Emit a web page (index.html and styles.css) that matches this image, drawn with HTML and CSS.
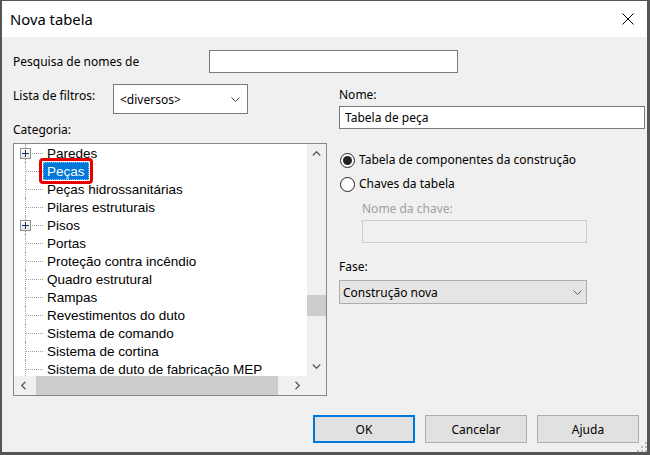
FILE: index.html
```html
<!DOCTYPE html>
<html lang="pt">
<head>
    <meta charset="UTF-8">
    <title>Nova tabela</title>
    <link rel="stylesheet" href="styles.css">
</head>
<body>
    <div class="window">
        <div class="titlebar">
            <span class="title">Nova tabela</span>
            <svg class="close" width="12" height="12" viewBox="0 0 12 12">
                <path d="M0.5 0.5 L11.5 11.5 M11.5 0.5 L0.5 11.5" stroke="#000" stroke-width="1" fill="none"/>
            </svg>
        </div>

        <div class="content">
            <div class="search-row">
                <label class="search-label">Pesquisa de nomes de</label>
                <input type="text" class="textbox search-box">
            </div>

            <div class="main">
                <div class="left">
                    <div class="filter-row">
                        <label class="filter-label">Lista de filtros:</label>
                        <div class="combo combo-white">
                            <span>&lt;diversos&gt;</span>
                            <svg width="9" height="5" viewBox="0 0 9 5"><path d="M0.5 0.5 L4.5 4.5 L8.5 0.5" stroke="#333" fill="none"/></svg>
                        </div>
                    </div>

                    <div class="field-label category-label">Categoria:</div>

                    <div class="tree">
                        <ul class="tree-items">
                            <li class="node"><span class="branch"><span class="expander"><svg width="9" height="9" viewBox="0 0 9 9"><path d="M1 4.5 H8 M4.5 1 V8" stroke="#1b2f6b" fill="none"/></svg></span></span><span class="text">Paredes</span></li>
                            <li class="node"><span class="branch"></span><span class="text selected">Peças</span></li>
                            <li class="node"><span class="branch"></span><span class="text">Peças hidrossanitárias</span></li>
                            <li class="node"><span class="branch"></span><span class="text">Pilares estruturais</span></li>
                            <li class="node"><span class="branch"><span class="expander"><svg width="9" height="9" viewBox="0 0 9 9"><path d="M1 4.5 H8 M4.5 1 V8" stroke="#1b2f6b" fill="none"/></svg></span></span><span class="text">Pisos</span></li>
                            <li class="node"><span class="branch"></span><span class="text">Portas</span></li>
                            <li class="node"><span class="branch"></span><span class="text">Proteção contra incêndio</span></li>
                            <li class="node"><span class="branch"></span><span class="text">Quadro estrutural</span></li>
                            <li class="node"><span class="branch"></span><span class="text">Rampas</span></li>
                            <li class="node"><span class="branch"></span><span class="text">Revestimentos do duto</span></li>
                            <li class="node"><span class="branch"></span><span class="text">Sistema de comando</span></li>
                            <li class="node"><span class="branch"></span><span class="text">Sistema de cortina</span></li>
                            <li class="node"><span class="branch"></span><span class="text">Sistema de duto de fabricação MEP</span></li>
                        </ul>

                        <div class="vscroll">
                            <div class="arrow-btn">
                                <svg width="9" height="5" viewBox="0 0 9 5"><path d="M0.8 4.5 L4.5 0.8 L8.2 4.5" stroke="#606060" stroke-width="1.4" fill="none"/></svg>
                            </div>
                            <div class="vtrack"><div class="vthumb"></div></div>
                            <div class="arrow-btn">
                                <svg width="9" height="5" viewBox="0 0 9 5"><path d="M0.8 0.5 L4.5 4.2 L8.2 0.5" stroke="#606060" stroke-width="1.4" fill="none"/></svg>
                            </div>
                        </div>

                        <div class="hscroll">
                            <div class="arrow-btn">
                                <svg width="5" height="9" viewBox="0 0 5 9"><path d="M4.5 0.8 L0.8 4.5 L4.5 8.2" stroke="#606060" stroke-width="1.4" fill="none"/></svg>
                            </div>
                            <div class="htrack"><div class="hthumb"></div></div>
                            <div class="arrow-btn">
                                <svg width="5" height="9" viewBox="0 0 5 9"><path d="M0.5 0.8 L4.2 4.5 L0.5 8.2" stroke="#606060" stroke-width="1.4" fill="none"/></svg>
                            </div>
                        </div>

                        <div class="corner"></div>
                    </div>
                </div>

                <div class="right">
                    <div class="field-label">Nome:</div>
                    <input type="text" class="textbox name-box" value="Tabela de peça">

                    <div class="radio-group">
                        <div class="radio-row">
                            <span class="radio checked"></span>
                            <span>Tabela de componentes da construção</span>
                        </div>
                        <div class="radio-row">
                            <span class="radio"></span>
                            <span>Chaves da tabela</span>
                        </div>
                    </div>

                    <div class="field-label key-label">Nome da chave:</div>
                    <div class="textbox key-box"></div>

                    <div class="field-label phase-label">Fase:</div>
                    <div class="combo combo-gray">
                        <span>Construção nova</span>
                        <svg width="9" height="5" viewBox="0 0 9 5"><path d="M0.5 0.5 L4.5 4.5 L8.5 0.5" stroke="#606060" fill="none"/></svg>
                    </div>
                </div>
            </div>

            <div class="footer">
                <button class="default">OK</button>
                <button>Cancelar</button>
                <button>Ajuda</button>
            </div>
        </div>

        <svg class="grip" width="10" height="10" viewBox="0 0 10 10" fill="#bcbcbc">
            <rect x="8" y="0" width="2" height="2"/>
            <rect x="4" y="4" width="2" height="2"/>
            <rect x="8" y="4" width="2" height="2"/>
            <rect x="0" y="8" width="2" height="2"/>
            <rect x="4" y="8" width="2" height="2"/>
            <rect x="8" y="8" width="2" height="2"/>
        </svg>
    </div>
</body>
</html>
```

FILE: styles.css
```css
* {
    box-sizing: border-box;
}

body {
    margin: 0;
    background-color: #f0f0f0;
}

.window {
    position: relative;
    width: 650px;
    height: 455px;
    border: solid #555;
    border-width: 1px 3px 3px 2px;
    background-color: #f0f0f0;
    font-family: "Noto Sans", sans-serif;
    font-size: 12px;
    color: #000;
    display: flex;
    flex-direction: column;
}

.titlebar {
    height: 36px;
    background-color: #fff;
    display: flex;
    align-items: center;
    padding-left: 8px;
    flex: none;
}

.title {
    font-size: 14.8px;
}

.close {
    margin-left: auto;
    margin-right: 13px;
}

.content {
    padding: 13px 2px 0 11px;
    display: flex;
    flex-direction: column;
}

.search-row {
    display: flex;
    align-items: center;
    height: 23px;
}

.search-label {
    width: 196px;
    line-height: 16px;
}

.textbox {
    height: 23px;
    border: 1px solid #7a7a7a;
    background-color: #fff;
    font-family: "Noto Sans", sans-serif;
    font-size: 12px;
    color: #000;
    padding: 0 5px;
    outline: none;
}

.search-box {
    width: 249px;
}

.main {
    margin-top: 11px;
    display: grid;
    grid-template-columns: 314px 306px;
    column-gap: 12px;
}

.filter-row {
    display: flex;
    height: 30px;
}

.filter-label {
    width: 100px;
    line-height: 16px;
    margin-top: 4px;
}

.combo {
    display: flex;
    align-items: center;
    justify-content: space-between;
}

.combo-white {
    width: 135px;
    height: 30px;
    border: 1px solid #7a7a7a;
    background-color: #fff;
    padding: 1px 7px 0 6px;
}

.combo-gray {
    width: 248px;
    height: 24px;
    border: 1px solid #adadad;
    background-color: #e5e5e5;
    padding: 0 4px 0 3px;
}

.field-label {
    line-height: 16px;
}

.category-label {
    margin-top: 8px;
}

/* tree view with its scrollbars */
.tree {
    margin-top: 5px;
    height: 253px;
    border: 1px solid #828790;
    background-color: #fff;
    display: grid;
    grid-template-columns: 293px 19px;
    grid-template-rows: 232px 19px;
    font-family: "Liberation Sans", Arial, sans-serif;
    font-size: 13.5px;
}

.tree-items {
    list-style: none;
    margin: 0;
    padding: 0;
    overflow: hidden;
}

.node {
    display: flex;
    height: 18px;
}

.branch {
    position: relative;
    width: 29px;
    flex: none;
}

.branch::before {
    content: "";
    position: absolute;
    left: 11px;
    top: 0;
    bottom: 0;
    border-left: 1px dotted #a0a0a0;
}

.branch::after {
    content: "";
    position: absolute;
    left: 12px;
    right: 0;
    top: 9px;
    border-top: 1px dotted #a0a0a0;
}

.expander {
    position: absolute;
    left: 6px;
    top: 4px;
    width: 11px;
    height: 11px;
    border: 1px solid #919191;
    background: linear-gradient(#fff, #e4e4e4);
    z-index: 1;
    display: flex;
}

.text {
    height: 18px;
    line-height: 18px;
    padding: 1px 4px 0 4px;
    white-space: nowrap;
}

.text.selected {
    position: relative;
    background-color: #0078d7;
    color: #fff;
    outline: 1px dotted rgba(255, 255, 255, 0.55);
    outline-offset: -1px;
}

.text.selected::after {
    content: "";
    position: absolute;
    top: -4px;
    bottom: -4px;
    left: -4px;
    right: -4px;
    border: 3px solid #e60000;
    border-radius: 4px;
}

.vscroll {
    background-color: #f0f0f0;
    display: flex;
    flex-direction: column;
}

.hscroll {
    background-color: #f0f0f0;
    display: flex;
}

.arrow-btn {
    width: 19px;
    height: 19px;
    flex: none;
    display: flex;
    align-items: center;
    justify-content: center;
}

.vtrack {
    flex: 1;
}

.vthumb {
    margin-top: 132px;
    height: 21px;
    background-color: #cdcdcd;
}

.htrack {
    flex: 1;
    display: flex;
}

.hthumb {
    margin-left: 3px;
    width: 242px;
    height: 100%;
    background-color: #cdcdcd;
}

.corner {
    background-color: #f0f0f0;
}

.right {
    padding-top: 3px;
    display: flex;
    flex-direction: column;
}

.name-box {
    margin-top: 3px;
    width: 306px;
}

.radio-group {
    margin-top: 21px;
    display: flex;
    flex-direction: column;
    gap: 4px;
}

.radio-row {
    height: 20px;
    display: flex;
    align-items: center;
    gap: 4px;
    line-height: 16px;
}

.radio {
    width: 15px;
    height: 15px;
    border: 1px solid #222;
    border-radius: 50%;
    background-color: #fff;
    display: flex;
    align-items: center;
    justify-content: center;
    margin-left: 1px;
}

.radio.checked::after {
    content: "";
    width: 9px;
    height: 9px;
    border-radius: 50%;
    background-color: #222;
}

.key-label {
    margin-top: 7px;
    margin-left: 23px;
    color: #a0a0a0;
}

.key-box {
    margin-top: 3px;
    margin-left: 23px;
    width: 225px;
    border-color: #cccccc;
    background-color: #f0f0f0;
}

.phase-label {
    margin-top: 16px;
}

.phase-label + .combo {
    margin-top: 5px;
}

.footer {
    margin-top: 19px;
    padding-right: 6px;
    display: flex;
    justify-content: flex-end;
    gap: 10px;
}

button {
    width: 102px;
    height: 28px;
    border: 1px solid #adadad;
    background-color: #e1e1e1;
    font-family: "Noto Sans", sans-serif;
    font-size: 12px;
    color: #000;
    padding: 0;
}

button.default {
    border: 2px solid #0078d7;
}

.grip {
    position: absolute;
    right: 0;
    bottom: 0;
}
```
